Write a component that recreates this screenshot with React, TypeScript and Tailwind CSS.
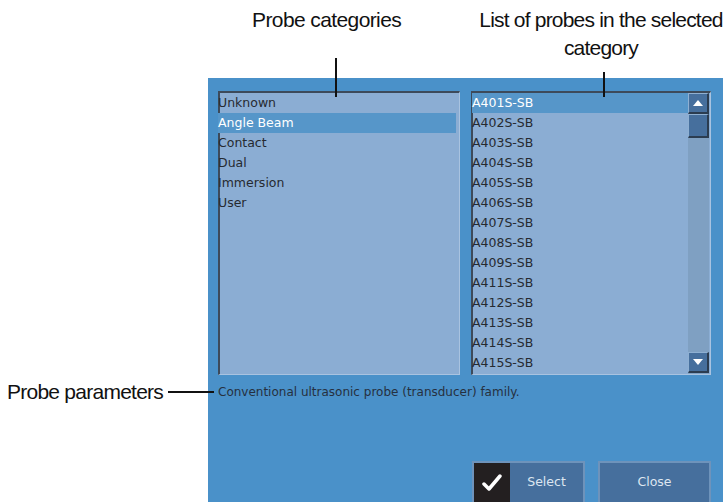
import React from "react";

const categories = ["Unknown", "Angle Beam", "Contact", "Dual", "Immersion", "User"];
const probes = [
  "A401S-SB","A402S-SB","A403S-SB","A404S-SB","A405S-SB","A406S-SB","A407S-SB",
  "A408S-SB","A409S-SB","A411S-SB","A412S-SB","A413S-SB","A414S-SB","A415S-SB",
];

const uiFont = { fontFamily: '"DejaVu Sans", Verdana, sans-serif' };
const annFont = { fontFamily: '"Liberation Sans", Arial, sans-serif' };

export default function App() {
  return (
    <div className="relative w-[723px] h-[502px] bg-white overflow-hidden">
      {/* annotations */}
      <div className="absolute left-0 top-0 w-[723px]" style={annFont}>
        <div className="absolute left-[252px] top-[8px] text-[21px] tracking-[-0.6px] leading-[24px] text-[#111] whitespace-nowrap">Probe categories</div>
        <div className="absolute left-[475px] top-[6px] w-[252px] text-center text-[21px] tracking-[-0.8px] leading-[28px] text-[#111] whitespace-nowrap">
          List of probes in the selected
          <br />
          category
        </div>
        <div className="absolute left-[7px] top-[380px] text-[21px] tracking-[-0.75px] leading-[24px] text-[#111] whitespace-nowrap">Probe parameters</div>
      </div>

      <div className="flex flex-col h-full">
        <div className="h-[78px]" />
        <div className="flex flex-1">
          <div className="w-[208px]" />
          <div className="flex-1 bg-[#4a91c9] flex flex-col pl-[10px] pr-[12px] pt-[13px]" style={uiFont}>
            <div className="flex gap-[11px] h-[284px]">
              {/* left list */}
              <div className="w-[242px] h-full bg-[#8badd3] border-t-2 border-l-2 border-[#3d4a5a] border-b border-r border-b-[#a9c3e0] border-r-[#a9c3e0] pr-[3px] flex flex-col">
                {categories.map((c, i) => (
                  <div
                    key={c}
                    className={`h-[20px] leading-[20px] text-[12.5px] -ml-[2px] ${i === 1 ? "bg-[#5696c9] text-white" : "text-[#262a30]"}`}
                  >
                    {c}
                  </div>
                ))}
              </div>
              {/* right list */}
              <div className="w-[240px] h-full bg-[#8badd3] border-t-2 border-l-2 border-[#3d4a5a] border-b border-r border-b-[#a9c3e0] border-r-[#a9c3e0] flex pr-[1px]">
                <div className="flex-1 flex flex-col">
                  {probes.map((p, i) => (
                    <div
                      key={p}
                      className={`h-[20px] leading-[20px] text-[12.5px] -ml-[1px] ${i === 0 ? "bg-[#5696c9] text-white" : "text-[#262a30]"}`}
                    >
                      {p}
                    </div>
                  ))}
                </div>
                <div className="w-[21px] bg-[#7fa0c2] flex flex-col">
                  <div className="h-[21px] bg-[#466f9d] border border-[#8fb0d2] border-b-2 border-r-2 border-b-[#2b3c50] border-r-[#2b3c50] flex items-center justify-center">
                    <svg width="10" height="6" viewBox="0 0 10 6"><path d="M0 6 L5 0 L10 6 Z" fill="#fff" /></svg>
                  </div>
                  <div className="h-[24px] bg-[#466f9d] border border-[#8fb0d2] border-b-2 border-r-2 border-b-[#2b3c50] border-r-[#2b3c50]" />
                  <div className="flex-1" />
                  <div className="h-[21px] mb-[1px] bg-[#466f9d] border border-[#8fb0d2] border-b-2 border-r-2 border-b-[#2b3c50] border-r-[#2b3c50] flex items-center justify-center">
                    <svg width="10" height="6" viewBox="0 0 10 6"><path d="M0 0 L5 6 L10 0 Z" fill="#fff" /></svg>
                  </div>
                </div>
              </div>
            </div>
            <div className="mt-[8px] text-[12px] leading-[18px] text-[#263040]">
              Conventional ultrasonic probe (transducer) family.
            </div>
            <div className="flex-1" />
            <div className="flex justify-end gap-[13px] h-[41px]">
              <div className="w-[113px] h-[41px] bg-[#466f9d] border-2 border-[#6e93bb] border-b-0 flex items-center">
                <div className="w-[36px] h-full bg-[#231f20] flex items-center justify-center">
                  <svg width="20" height="18" viewBox="0 0 20 18">
                    <path d="M2 10 L7 15 L18 2" stroke="#fff" strokeWidth="3.5" fill="none" strokeLinecap="round" strokeLinejoin="round" />
                  </svg>
                </div>
                <div className="flex-1 text-center text-[12.5px] text-[#dde6f0]">Select</div>
              </div>
              <div className="w-[113px] h-[41px] bg-[#466f9d] border-2 border-[#6e93bb] border-b-0 flex items-center justify-center text-[12.5px] text-[#dde6f0]">
                Close
              </div>
            </div>
          </div>
        </div>
      </div>

      {/* leader lines */}
      <div className="absolute left-[335px] top-[58px] w-[2px] h-[39px] bg-[#111]" />
      <div className="absolute left-[603px] top-[72px] w-[2px] h-[25px] bg-[#111]" />
      <div className="absolute left-[168px] top-[391px] w-[46px] h-[2px] bg-[#111]" />
    </div>
  );
}
